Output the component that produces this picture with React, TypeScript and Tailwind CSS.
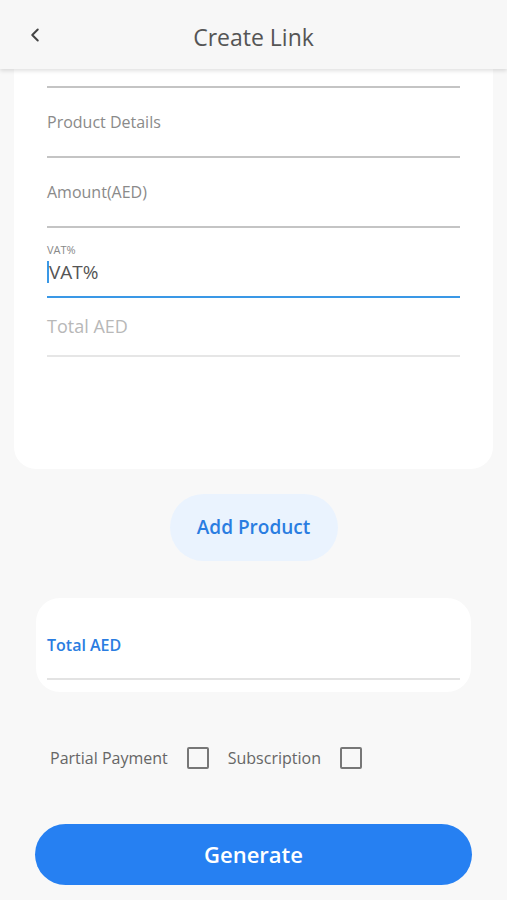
import { ChevronLeft } from "lucide-react";

function Field({ label, underline = "border-[#c4c4c4]" }: { label: string; underline?: string }) {
  return (
    <div className={`h-[70px] flex items-center border-b-2 ${underline}`}>
      <span className="text-[16px] text-[#8a8a8a]">{label}</span>
    </div>
  );
}

function Check({ label }: { label: string }) {
  return (
    <div className="flex items-center gap-[19px]">
      <span className="text-[16px] text-[#666]">{label}</span>
      <span className="w-[22px] h-[22px] border-2 border-[#777] rounded-[2px]" />
    </div>
  );
}

export default function App() {
  return (
    <div
      className="w-[507px] h-[900px] overflow-hidden bg-[#f8f8f8] flex flex-col"
      style={{ fontFamily: '"Open Sans", "Noto Sans", sans-serif' }}
    >
      {/* Header */}
      <div className="relative z-10 h-[69px] shrink-0 bg-[#f7f7f7] shadow-[0_2px_4px_rgba(0,0,0,0.12)] flex items-center justify-center">
        <button className="absolute left-[24px] top-[24px] text-[#444]">
          <ChevronLeft size={22} strokeWidth={2.2} />
        </button>
        <h1 className="text-[23px] text-[#555] mt-[5px]">Create Link</h1>
      </div>

      {/* Product card (scrolled) */}
      <div className="mx-[14px] bg-white rounded-b-[22px] px-[33px] pb-[112px]">
        <div className="h-[19px] border-b-2 border-[#c4c4c4]" />
        <Field label="Product Details" />
        <Field label="Amount(AED)" />
        <div className="h-[70px] flex flex-col justify-end pb-[13px] border-b-2 border-[#3a98e6]">
          <span className="text-[11px] text-[#888] leading-none">VAT%</span>
          <div className="flex items-center mt-[6px]">
            <span className="w-[2px] h-[22px] bg-[#3a98e6]" />
            <span className="text-[19px] text-[#555] leading-none">VAT%</span>
          </div>
        </div>
        <div className="h-[59px] flex items-center border-b-2 border-[#e6e6e6]">
          <span className="text-[18px] text-[#b8b8b8]">Total AED</span>
        </div>
      </div>

      {/* Add product */}
      <div className="flex justify-center mt-[25px]">
        <button className="w-[168px] h-[67px] rounded-full bg-[#eaf3fe] text-[#2a7de1] text-[19px] font-semibold">
          Add Product
        </button>
      </div>

      {/* Total card */}
      <div className="mx-[36px] mt-[37px] bg-white rounded-[24px] px-[11px] pt-[32px] pb-[12px]">
        <div className="h-[50px] flex items-center border-b-2 border-[#e3e3e3]">
          <span className="text-[16px] font-semibold text-[#2a7de1] -mt-[18px]">Total AED</span>
        </div>
      </div>

      {/* Options */}
      <div className="flex items-center gap-[19px] ml-[50px] mt-[54px]">
        <Check label="Partial Payment" />
        <Check label="Subscription" />
      </div>

      {/* Generate */}
      <button className="mx-[35px] mt-[54px] h-[61px] rounded-full bg-[#2680f2] text-white text-[22px] font-semibold">
        Generate
      </button>
    </div>
  );
}
